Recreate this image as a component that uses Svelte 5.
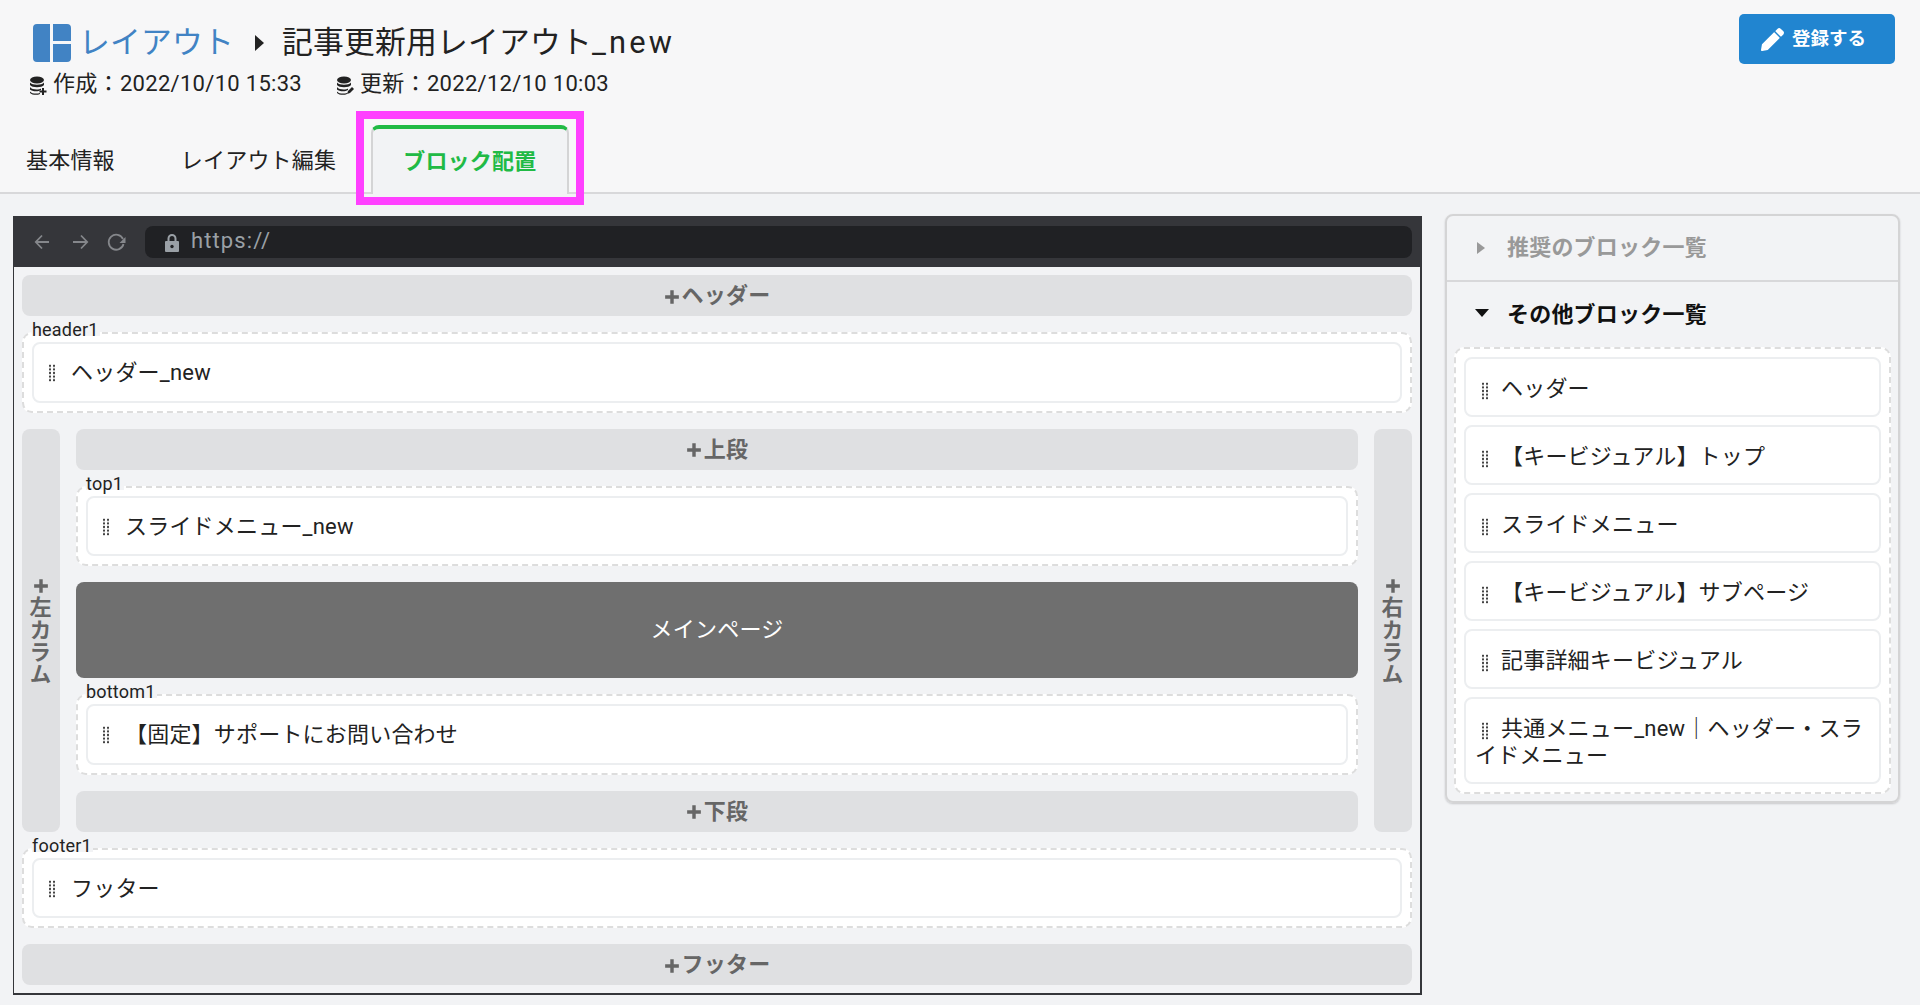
<script>
	// 右側のブロック一覧
	const otherBlocks = [
		'ヘッダー',
		'【キービジュアル】トップ',
		'スライドメニュー',
		'【キービジュアル】サブページ',
		'記事詳細キービジュアル',
		'共通メニュー_new｜ヘッダー・スライドメニュー'
	];
</script>

{#snippet plus()}
	<svg class="plus" viewBox="0 0 14 14" aria-hidden="true">
		<path d="M7 1v12M1 7h12" fill="none" stroke="currentColor" stroke-width="3" />
	</svg>
{/snippet}

{#snippet dbIcon(mark)}
	<svg class="db" viewBox="0 0 18 20" aria-hidden="true">
		<ellipse cx="8" cy="4" rx="7" ry="3.5" fill="#222" />
		<path d="M1 6.500c2 3 12 3 14 0V9c-2 3-12 3-14 0zM1 11c2 3 9 3 11 1.500V14c-3 2-9 1.500-11-.5zM1 15.500c2 2.500 7 2.500 10 1.500v1c-3 1.500-8 1-10-1z" fill="#222" />
		{#if mark === 'plus'}
			<path d="M14 12v7M10.500 15.500h7" stroke="#222" stroke-width="2" fill="none" />
		{:else}
			<path d="M11 18l1-3 4-4 2 2-4 4z" fill="#222" />
		{/if}
	</svg>
{/snippet}

{#snippet slot(label, name)}
	<div class="slot">
		<span class="slot-label">{label}</span>
		<div class="card"><i class="grip"></i><span class="card-name">{name}</span></div>
	</div>
{/snippet}

<header class="page-head">
	<div class="head-top">
		<div>
			<h1 class="title">
				<svg class="logo" viewBox="0 0 38 38" aria-hidden="true">
					<path d="M4 0h13v38H4a4 4 0 0 1-4-4V4a4 4 0 0 1 4-4zM20 0h14a4 4 0 0 1 4 4v13H20zM20 20h18v14a4 4 0 0 1-4 4H20z" fill="#4183c4" />
				</svg>
				<span class="crumb">レイアウト</span>
				<svg class="crumb-arrow" viewBox="0 0 10 16" aria-hidden="true"><path d="M1 0l9 8-9 8z" fill="#222" /></svg>
				<span>記事更新用レイアウト<span class="suffix">_new</span></span>
			</h1>
			<div class="meta">
				<span class="meta-item">{@render dbIcon('plus')}作成：2022/10/10 15:33</span>
				<span class="meta-item">{@render dbIcon('pen')}更新：2022/12/10 10:03</span>
			</div>
		</div>
		<button class="save">
			<svg viewBox="0 0 512 512" aria-hidden="true">
				<path d="M497.9 142.1l-46.1 46.1c-4.7 4.7-12.3 4.7-17 0l-111-111c-4.7-4.7-4.7-12.3 0-17l46.1-46.1c18.7-18.7 49.1-18.7 67.9 0l60.1 60.1c18.8 18.7 18.8 49.1 0 67.9zM284.2 99.8L21.6 362.4.4 483.9c-2.9 16.4 11.4 30.6 27.8 27.8l121.5-21.3 262.6-262.6c4.7-4.7 4.7-12.3 0-17l-111-111c-4.8-4.7-12.4-4.7-17.1 0z" fill="#fff" />
			</svg>
			登録する
		</button>
	</div>
	<nav class="tabs">
		<span class="tab first">基本情報</span>
		<span class="tab">レイアウト編集</span>
		<span class="tab active">ブロック配置<span class="highlight"></span></span>
	</nav>
</header>

<main class="workspace">
	<section class="browser">
		<div class="toolbar">
			<svg class="nav" viewBox="0 0 100 24" aria-hidden="true">
				<g fill="none" stroke="#85878b" stroke-width="1.800">
					<path d="M15 12H2M8 5.500L1.800 12 8 18.500" />
					<path d="M39 12h14M47 5.500l6.200 6.500-6.200 6.500" />
					<path d="M89 9a7.500 7.500 0 1 0 .5 5" />
				</g>
				<path d="M91.500 7v6h-6z" fill="#85878b" />
			</svg>
			<div class="address">
				<svg class="lock" viewBox="0 0 16 20" aria-hidden="true">
					<path d="M4.500 8V5.500a3.500 3.500 0 0 1 7 0V8" fill="none" stroke="#9aa0a6" stroke-width="2" />
					<path d="M2 8h12a1 1 0 0 1 1 1v9a1 1 0 0 1-1 1H2a1 1 0 0 1-1-1V9a1 1 0 0 1 1-1z" fill="#9aa0a6" />
					<circle cx="8" cy="13.500" r="1.700" fill="#202124" />
				</svg>
				https://
			</div>
		</div>
		<div class="canvas">
			<div class="add">{@render plus()}ヘッダー</div>
			{@render slot('header1', 'ヘッダー_new')}
			<div class="columns">
				<div class="add side">{@render plus()}<span>左カラム</span></div>
				<div class="center">
					<div class="add">{@render plus()}上段</div>
					{@render slot('top1', 'スライドメニュー_new')}
					<div class="main-page">メインページ</div>
					{@render slot('bottom1', '【固定】サポートにお問い合わせ')}
					<div class="add">{@render plus()}下段</div>
				</div>
				<div class="add side">{@render plus()}<span>右カラム</span></div>
			</div>
			{@render slot('footer1', 'フッター')}
			<div class="add">{@render plus()}フッター</div>
		</div>
	</section>

	<aside class="panel">
		<div class="panel-title muted">
			<svg class="caret" viewBox="0 0 8 12" aria-hidden="true"><path d="M0 0l8 6-8 6z" fill="#999" /></svg>
			推奨のブロック一覧
		</div>
		<div class="panel-title second">
			<svg class="caret down" viewBox="0 0 14 8" aria-hidden="true"><path d="M0 0h14L7 8z" fill="#111" /></svg>
			その他ブロック一覧
		</div>
		<div class="block-list">
			{#each otherBlocks as block}
				<div class="block"><i class="grip"></i>{block}</div>
			{/each}
		</div>
	</aside>
</main>

<style>
	:global(body) {
		background: #f2f3f5;
		color: #222;
		font-family: Roboto, 'Noto Sans CJK JP', sans-serif;
		font-size: 22px;
		letter-spacing: 0.2px;
		line-height: 28.57px;
	}

	.page-head {
		box-sizing: border-box;
		height: 194px;
		padding-top: 14px;
		background: #f7f7f8;
		border-bottom: 2px solid #d8d8da;
	}

	.head-top {
		display: flex;
		justify-content: space-between;
		align-items: flex-start;
		height: 97px;
		padding: 0 25px 0 29px;
	}

	.title {
		display: flex;
		align-items: center;
		margin: 10px 0 0 4px;
		font-size: 30.8px;
		font-weight: 400;
		line-height: 38px;
	}

	.suffix {
		letter-spacing: 3.2px;
	}

	.logo {
		width: 38px;
		height: 38px;
		margin-right: 8px;
	}

	.crumb {
		color: #4183c4;
	}

	.crumb-arrow {
		width: 10px;
		height: 16px;
		margin: 0 18px 0 20px;
	}

	.meta {
		display: flex;
		gap: 34px;
		margin-top: 8px;
		letter-spacing: 0.3px;
		line-height: 28px;
	}

	.meta-item {
		display: flex;
		align-items: center;
		gap: 6px;
	}

	.db {
		width: 18px;
		height: 20px;
		margin-top: 4px;
	}

	.save {
		display: flex;
		align-items: center;
		gap: 8px;
		width: 156px;
		height: 50px;
		padding: 1px 0 0 22px;
		background: #2185d0;
		border: 0;
		border-radius: 5px;
		color: #fff;
		font: inherit;
		font-size: 18.5px;
		font-weight: 700;
	}

	.save svg {
		width: 23px;
		height: 23px;
	}

	.tabs {
		display: flex;
		align-items: flex-end;
		box-sizing: border-box;
		height: 81px;
		padding-left: 26px;
	}

	.tab {
		position: relative;
		box-sizing: border-box;
		height: 69px;
		margin-bottom: -2px;
		padding: 0 33px;
		line-height: 71px;
		white-space: nowrap;
	}

	.tab.first {
		padding-left: 0;
	}

	.tab.active {
		width: 198px;
		margin-left: 2px;
		padding: 0 30px;
		background: #f2f3f5;
		border: 2px solid #d4d4d5;
		border-top: 4px solid #21ba45;
		border-bottom: 0;
		border-radius: 8px 8px 0 0;
		color: #21ba45;
		font-weight: 700;
		line-height: 65px;
	}

	.highlight {
		position: absolute;
		top: -18px;
		left: -17px;
		right: -17px;
		bottom: -11px;
		border: 8px solid #ff40ff;
	}

	.workspace {
		display: flex;
		align-items: flex-start;
		gap: 23px;
		padding: 20px 20px 0 13px;
	}

	.browser {
		box-sizing: border-box;
		width: 1409px;
		margin-top: 2px;
		border: solid #35363a;
		border-width: 0 2px 2px 1px;
	}

	.toolbar {
		display: flex;
		align-items: center;
		box-sizing: border-box;
		height: 51px;
		padding: 0 8px 0 20px;
		background: #35363a;
	}

	.nav {
		width: 100px;
		height: 24px;
		margin-right: 11px;
	}

	.address {
		display: flex;
		align-items: center;
		flex: 1;
		height: 32px;
		padding-left: 19px;
		border-radius: 8px;
		background: #202124;
		color: #9aa0a6;
		letter-spacing: 1.1px;
	}

	.lock {
		width: 16px;
		height: 20px;
		margin-top: 2px;
		margin-right: 11px;
	}

	.canvas,
	.center {
		display: flex;
		flex-direction: column;
		gap: 16px;
		min-width: 0;
	}

	.canvas {
		padding: 8px;
	}

	.center {
		flex: 1;
	}

	.columns {
		display: flex;
		gap: 16px;
	}

	.add {
		display: flex;
		align-items: center;
		justify-content: center;
		box-sizing: border-box;
		height: 41px;
		padding-top: 2px;
		background: #dfe0e2;
		border-radius: 8px;
		color: #666;
		font-weight: 700;
	}

	.plus {
		width: 16px;
		height: 16px;
		margin-right: 2px;
	}

	.add.side {
		flex: none;
		flex-direction: column;
		width: 38px;
		height: auto;
	}

	.add.side span {
		margin-right: 7px;
		writing-mode: vertical-rl;
		text-orientation: upright;
		line-height: 1;
	}

	.add.side .plus {
		margin: 0 0 2px;
	}

	.slot {
		position: relative;
		padding: 8px;
		background: #fff;
		border: 2px dashed #ddd;
		border-radius: 10px;
	}

	.slot-label {
		position: absolute;
		top: -14px;
		left: 8px;
		height: 16px;
		padding-right: 1px;
		background: #f2f3f5;
		font-size: 18px;
		line-height: 20px;
	}

	.card {
		display: flex;
		align-items: center;
		padding: 15px 15px 13px 14px;
		background: #fff;
		border: 2px solid #eceef0;
		border-radius: 8px;
	}

	.card-name {
		margin-left: 15px;
	}

	.grip {
		flex: none;
		display: inline-block;
		width: 8px;
		height: 18px;
		background-image: radial-gradient(circle at center, #444 1.1px, transparent 1.5px);
		background-size: 4px 3.6px;
	}

	.main-page {
		display: flex;
		align-items: center;
		justify-content: center;
		height: 96px;
		background: #6f6f6f;
		border-radius: 8px;
		color: #fff;
	}

	.panel {
		box-sizing: border-box;
		width: 455px;
		border: 2px solid #d4d4d5;
		border-radius: 8px;
		box-shadow: 0 1px 2px rgba(34, 36, 38, 0.2);
	}

	.panel-title {
		position: relative;
		display: flex;
		align-items: center;
		height: 65px;
		padding-left: 60px;
		color: #111;
		font-weight: 700;
	}

	.panel-title.second {
		box-sizing: border-box;
		padding-top: 2px;
	}

	.panel-title.muted {
		box-sizing: border-box;
		height: 66px;
		border-bottom: 2px solid #d8d8da;
		color: #999;
	}

	.caret {
		position: absolute;
		left: 30px;
		top: 26px;
		width: 8px;
		height: 12px;
	}

	.caret.down {
		left: 28px;
		top: 27px;
		width: 14px;
		height: 8px;
	}

	.block-list {
		display: flex;
		flex-direction: column;
		gap: 8px;
		margin: 0 7px 7px;
		padding: 8px;
		background: #fff;
		border: 2px dashed #ddd;
		border-radius: 10px;
	}

	.block {
		padding: 16px 9px 13px;
		border: 2px solid #eceef0;
		border-radius: 8px;
		line-height: 27px;
	}

	.block .grip {
		margin: 0 12px 0 6px;
		vertical-align: -4px;
	}
</style>
